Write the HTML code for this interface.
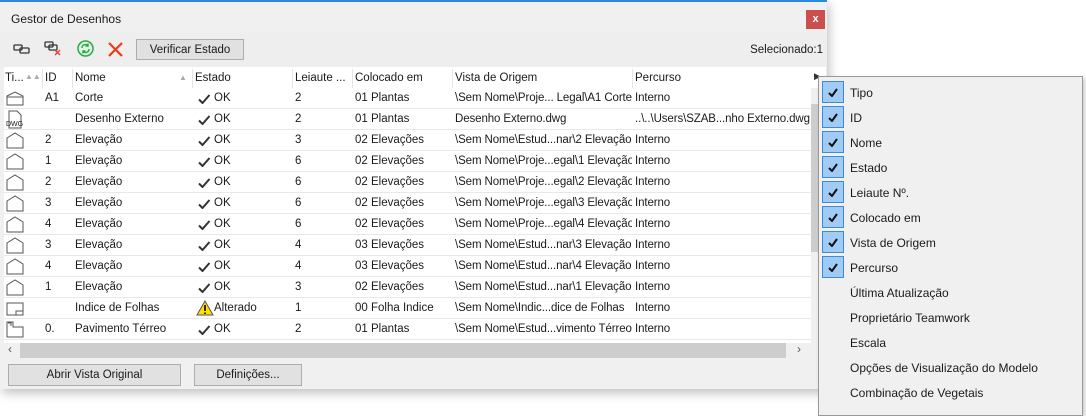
<!DOCTYPE html><html><head><meta charset="utf-8"><style>
*{margin:0;padding:0;box-sizing:border-box}
body{width:1086px;height:405px;background:#fff;font-family:"Liberation Sans",sans-serif;font-size:11.5px;color:#1a1a1a;position:relative;overflow:hidden}
.a{position:absolute;white-space:nowrap}
#dlg{position:absolute;left:0;top:0;width:827px;height:389px;background:#f0f0f0;border-top:2px solid #2b8ae0;box-shadow:2px 4px 10px rgba(0,0,0,.25)}
.btn{position:absolute;background:#e1e1e1;border:1px solid #adadad;text-align:center;line-height:20px}
.row{position:absolute;left:4px;width:807px;height:21px;background:#fff;border-bottom:1px solid #e8e8e8}
.row span{position:absolute;top:4px;overflow:hidden;white-space:nowrap}
.hdr span{position:absolute;top:3px;white-space:nowrap}
.sep{position:absolute;top:0;width:1px;height:19px;background:#e5e5e5}
.menu{position:absolute;left:818px;top:76px;width:265px;height:340px;background:#f0f0f0;border:1px solid #999;box-shadow:2px 2px 4px rgba(0,0,0,.2)}
.mi{position:absolute;left:31px;font-size:12px}
.cb{position:absolute;left:3px;width:22px;height:22px;background:#9fcbf5;border:1px solid #3d8ad6}
.cb svg{position:absolute;left:5px;top:6px}
</style></head><body>
<div id="dlg">
<div class="a" style="left:11px;top:10px;font-size:12px">Gestor de Desenhos</div>
<div class="a" style="left:806px;top:8px;width:19px;height:19px;background:#c9504f;color:#fff;font-size:11px;font-weight:bold;text-align:center;line-height:18px">x</div>
<div style="position:absolute;left:0;top:31px;width:827px;height:36px;background:#eeeeee"></div>
<svg class="a" style="left:13px;top:41px" width="18" height="12"><g fill="none" stroke="#333" stroke-width="1.3"><rect x="1" y="2" width="8" height="5" rx="1"/><rect x="7" y="5" width="9" height="5" rx="1"/></g></svg>
<svg class="a" style="left:44px;top:38px" width="18" height="16"><g fill="none" stroke="#333" stroke-width="1.3"><rect x="1" y="2" width="8" height="5" rx="1"/><rect x="5" y="5" width="8" height="5" rx="1"/></g><path d="M11 10l5 5M16 10l-5 5" stroke="#e33" stroke-width="1.3"/></svg>
<svg class="a" style="left:77px;top:38px" width="17" height="17"><circle cx="8.5" cy="8.5" r="7.5" fill="#dff5df" stroke="#2aa84a" stroke-width="1.5"/><path d="M5 8a3.5 3.5 0 0 1 6-2.5M12 9a3.5 3.5 0 0 1-6 2.5M11 3.5v2.5h-2.5M6 13.5v-2.5h2.5" fill="none" stroke="#2aa84a" stroke-width="1.4"/></svg>
<svg class="a" style="left:108px;top:40px" width="15" height="15"><path d="M1 1l13 13M14 1l-13 13" stroke="#f03a17" stroke-width="2.2"/></svg>
<div class="btn" style="left:136px;top:37px;width:108px;height:21px">Verificar Estado</div>
<div class="a" style="right:4px;top:42px">Selecionado:1</div>
<div style="position:absolute;left:4px;top:65px;width:822px;height:275px;background:#fff"></div>
<div class="hdr" style="position:absolute;left:0;top:67px;width:811px;height:19px">
<span style="left:5px">Ti...</span><span style="left:25px;top:3px;color:#aaa;font-size:8px">▲▲</span><div class="sep" style="left:42px"></div>
<span style="left:45px">ID</span><div class="sep" style="left:72px"></div>
<span style="left:75px">Nome</span><span style="left:179px;top:4px;color:#aaa;font-size:8px">▲</span><div class="sep" style="left:192px"></div>
<span style="left:195px">Estado</span><div class="sep" style="left:292px"></div>
<span style="left:295px">Leiaute ...</span><div class="sep" style="left:352px"></div>
<span style="left:355px">Colocado em</span><div class="sep" style="left:452px"></div>
<span style="left:455px">Vista de Origem</span><div class="sep" style="left:632px"></div>
<span style="left:635px">Percurso</span>
</div>
<div class="a" style="left:814px;top:69px;font-size:9px;color:#333">▶</div>
<div id="rows"></div>
<div style="position:absolute;left:811px;top:86px;width:15px;height:255px;background:#f0f0f0"></div>
<div style="position:absolute;left:811px;top:102px;width:15px;height:148px;background:#cdcdcd"></div>
<div style="position:absolute;left:4px;top:339px;width:807px;height:2px;background:#fff"></div>
<div style="position:absolute;left:4px;top:341px;width:807px;height:15px;background:#f0f0f0"></div>
<div style="position:absolute;left:20px;top:341px;width:766px;height:15px;background:#cdcdcd"></div>
<div class="a" style="left:8px;top:340px;font-size:12px;color:#555">&lsaquo;</div>
<div class="a" style="left:797px;top:340px;font-size:12px;color:#555">&rsaquo;</div>
<div class="btn" style="left:8px;top:362px;width:173px;height:22px">Abrir Vista Original</div>
<div class="btn" style="left:194px;top:362px;width:108px;height:22px">Definições...</div>
</div>
<div class="menu" id="menu"></div>
<script>
var CK='<svg width="10" height="9"><path d="M1 5l3 3 5-7" fill="none" stroke="#111" stroke-width="2"/></svg>';
var M=["Tipo","ID","Nome","Estado","Leiaute Nº.","Colocado em","Vista de Origem","Percurso","Última Atualização","Proprietário Teamwork","Escala","Opções de Visualização do Modelo","Combinação de Vegetais"];
var mh='';M.forEach(function(m,k){if(k<8)mh+='<div class="cb" style="top:'+(4+25*k)+'px">'+CK+'</div>';mh+='<div class="mi" style="top:'+(9+25*k)+'px">'+m+'</div>';});
document.getElementById('menu').innerHTML=mh;
var R=[
["c","A1","Corte","OK","2","01 Plantas","\\Sem Nome\\Proje... Legal\\A1 Corte","Interno"],
["d","","Desenho Externo","OK","2","01 Plantas","Desenho Externo.dwg","..\\..\\Users\\SZAB...nho Externo.dwg"],
["e","2","Elevação","OK","3","02 Elevações","\\Sem Nome\\Estud...nar\\2 Elevação","Interno"],
["e","1","Elevação","OK","6","02 Elevações","\\Sem Nome\\Proje...egal\\1 Elevação","Interno"],
["e","2","Elevação","OK","6","02 Elevações","\\Sem Nome\\Proje...egal\\2 Elevação","Interno"],
["e","3","Elevação","OK","6","02 Elevações","\\Sem Nome\\Proje...egal\\3 Elevação","Interno"],
["e","4","Elevação","OK","6","02 Elevações","\\Sem Nome\\Proje...egal\\4 Elevação","Interno"],
["e","3","Elevação","OK","4","03 Elevações","\\Sem Nome\\Estud...nar\\3 Elevação","Interno"],
["e","4","Elevação","OK","4","03 Elevações","\\Sem Nome\\Estud...nar\\4 Elevação","Interno"],
["e","1","Elevação","OK","3","02 Elevações","\\Sem Nome\\Estud...nar\\1 Elevação","Interno"],
["i","","Índice de Folhas","Alterado","1","00 Folha Índice","\\Sem Nome\\Índic...dice de Folhas","Interno"],
["p","0.","Pavimento Térreo","OK","2","01 Plantas","\\Sem Nome\\Estud...vimento Térreo","Interno"]];
var IC={c:'<path d="M2 7l8-4 8 4v9H2zM2 8h16" fill="none" stroke="#555"/>',
e:'<path d="M2 7l8-5 8 5v10H2z" fill="none" stroke="#555"/>',
d:'<path d="M4 1h8l4 4v13H4z" fill="none" stroke="#555"/><text x="1" y="16" font-size="7" font-family="Liberation Sans" fill="#222">DWG</text>',
i:'<rect x="2" y="4" width="16" height="12" fill="none" stroke="#555"/><rect x="11" y="12" width="7" height="4" fill="none" stroke="#555"/>',
p:'<path d="M2 2h6v5h10v10H2z" fill="none" stroke="#555"/><path d="M3 3h3v3" fill="none" stroke="#555"/>'};
var h='';
R.forEach(function(r,k){var t=86+21*k;
var st=r[3]=="OK"?'<svg style="position:absolute;left:194px;top:6px" width="13" height="10"><path d="M1 5.5l3.5 3.5 7-8" fill="none" stroke="#333" stroke-width="2"/></svg><span style="left:210px">OK</span>':'<svg style="position:absolute;left:192px;top:2px" width="18" height="16"><path d="M9 1L17 15H1z" fill="#ffe000" stroke="#555"/><path d="M9 5v6M9 12.5v1.5" stroke="#000" stroke-width="1.6"/></svg><span style="left:210px">Alterado</span>';
h+='<div class="row" style="top:'+t+'px"><svg style="position:absolute;left:1px;top:1px" width="20" height="19">'+IC[r[0]]+'</svg><span style="left:41px">'+r[1]+'</span><span style="left:71px">'+r[2]+'</span>'+st+'<span style="left:291px">'+r[4]+'</span><span style="left:351px">'+r[5]+'</span><span style="left:451px;width:177px;letter-spacing:-0.1px">'+r[6]+'</span><span style="left:631px;width:176px;letter-spacing:-0.1px">'+r[7]+'</span></div>';});
document.getElementById('rows').innerHTML=h;
</script>
</body></html>
